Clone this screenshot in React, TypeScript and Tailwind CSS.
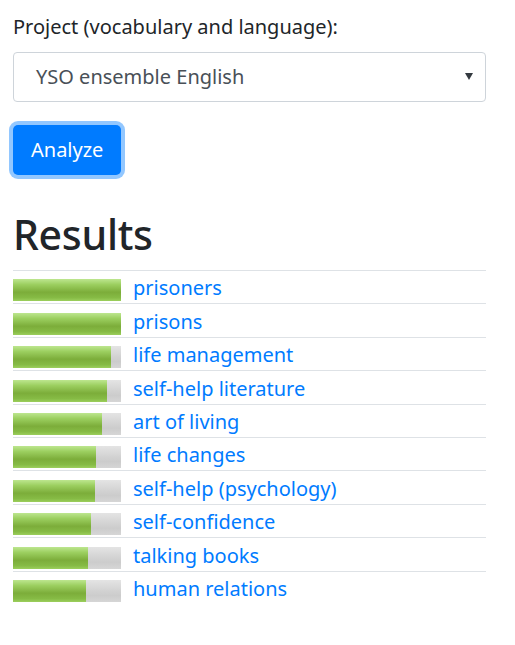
import React from 'react';

const results = [
  { label: 'prisoners', score: 100 },
  { label: 'prisons', score: 100 },
  { label: 'life management', score: 91 },
  { label: 'self-help literature', score: 87 },
  { label: 'art of living', score: 82 },
  { label: 'life changes', score: 77 },
  { label: 'self-help (psychology)', score: 76 },
  { label: 'self-confidence', score: 72 },
  { label: 'talking books', score: 69 },
  { label: 'human relations', score: 68 },
];

const App: React.FC = () => {
  return (
    <div className="min-h-[645px] bg-white px-[13px] pt-[12px] text-[#212529] font-['Noto_Sans',sans-serif]">
      <div className="w-[473px]">
        <label className="block text-[20px] leading-[30px] mb-[10px]">Project (vocabulary and language):</label>
        <div className="relative h-[50px] border border-[#ced4da] rounded-[4px] flex items-center pl-[22px] text-[20px] text-[#495057]">
          YSO ensemble English
          <span className="absolute right-[12px] top-[20px] w-0 h-0 border-l-[4px] border-r-[4px] border-t-[7px] border-l-transparent border-r-transparent border-t-[#343a40]" />
        </div>
        <button className="mt-[23px] h-[50px] px-[18px] rounded-[5px] bg-[#007bff] text-white text-[20px] shadow-[0_0_0_4px_rgba(38,143,255,0.5)]">
          Analyze
        </button>
        <h2 className="mt-[34px] text-[41px] leading-[50px] font-medium tracking-[-0.3px] mb-[11px]">Results</h2>
        <div>
          {results.map((r) => (
            <div key={r.label} className="flex items-end h-[33.4px] pb-[2px] border-t border-[#dee2e6]">
              <div className="w-[108px] h-[22px] bg-[linear-gradient(#e4e4e4,#d2d2d2_50%,#cccccc_70%,#d6d6d6)] shrink-0">
                <div
                  className="h-full bg-[linear-gradient(#bde68f,#9ccf60_25%,#7cad3a_60%,#86bb45_85%,#9ccf5d)]"
                  style={{ width: `${r.score}%` }}
                />
              </div>
              <a href="#" className="ml-[12px] text-[20px] text-[#007bff] leading-[28px] relative top-[1px]">{r.label}</a>
            </div>
          ))}
        </div>
      </div>
    </div>
  );
};

export default App;
